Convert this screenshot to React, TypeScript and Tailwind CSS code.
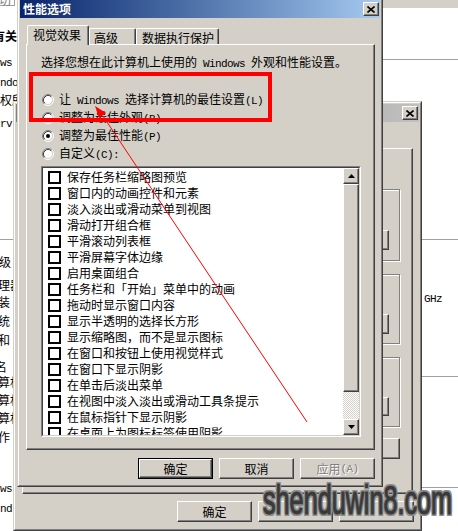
import React from 'react';

const raised =
  'bg-[#d4d0c8] border border-t-white border-l-white border-r-[#404040] border-b-[#404040] shadow-[inset_-1px_-1px_0_#808080]';

const Lat = ({ children }: { children: React.ReactNode }) => (
  <span className="[font-family:'Liberation_Mono',monospace] text-[11px] tracking-[-0.6px]">{children}</span>
);

const CloseBtn = () => (
  <div className={`w-[16px] h-[14px] flex items-center justify-center ${raised}`}>
    <svg width="8" height="7" viewBox="0 0 8 7">
      <path d="M0.5 0.5L7.5 6.5M7.5 0.5L0.5 6.5" stroke="#000" strokeWidth="1.6" />
    </svg>
  </div>
);

const Tri = ({ down }: { down?: boolean }) => (
  <svg width="7" height="4" viewBox="0 0 7 4">
    <path d={down ? 'M0 0H7L3.5 4Z' : 'M0 4H7L3.5 0Z'} fill="#000" />
  </svg>
);

const Radio = ({ checked }: { checked?: boolean }) => (
  <svg width="12" height="12" viewBox="0 0 12 12" className="shrink-0">
    <circle cx="6" cy="6" r="4.5" fill="#fff" />
    <path d="M2.11 9.89A5.5 5.5 0 0 1 9.89 2.11" fill="none" stroke="#808080" />
    <path d="M9.89 2.11A5.5 5.5 0 0 1 2.11 9.89" fill="none" stroke="#ffffff" />
    <path d="M2.82 9.18A4.5 4.5 0 0 1 9.18 2.82" fill="none" stroke="#404040" />
    <path d="M9.18 2.82A4.5 4.5 0 0 1 2.82 9.18" fill="none" stroke="#d4d0c8" />
    {checked && <circle cx="6" cy="6" r="2" fill="#000" />}
  </svg>
);

const Btn = ({ children, def, disabled }: { children?: React.ReactNode; def?: boolean; disabled?: boolean }) => (
  <div className={`w-[75px] h-[21px] shrink-0 ${def ? 'border border-black' : ''}`}>
    <div
      className={`h-full flex items-center justify-center leading-[14px] ${raised} ${
        disabled ? 'text-[#808080] [text-shadow:1px_1px_0_#fff]' : 'text-black'
      }`}
    >
      {children}
    </div>
  </div>
);

const items = [
  '保存任务栏缩略图预览',
  '窗口内的动画控件和元素',
  '淡入淡出或滑动菜单到视图',
  '滑动打开组合框',
  '平滑滚动列表框',
  '平滑屏幕字体边缘',
  '启用桌面组合',
  '任务栏和「开始」菜单中的动画',
  '拖动时显示窗口内容',
  '显示半透明的选择长方形',
  '显示缩略图，而不是显示图标',
  '在窗口和按钮上使用视觉样式',
  '在窗口下显示阴影',
  '在单击后淡出菜单',
  '在视图中淡入淡出或滑动工具条提示',
  '在鼠标指针下显示阴影',
  '在桌面上为图标标签使用阴影',
];

// window behind the dialog, only its right strip and bottom show
const BackWindow = () => (
  <div className="absolute left-[13px] top-[101px] w-[409px] h-[430px] border border-t-[#d4d0c8] border-l-[#d4d0c8] border-r-[#404040] border-b-[#404040]">
    <div className="h-full border border-t-white border-l-white border-r-[#808080] border-b-[#808080] bg-[#d4d0c8] p-px flex flex-col">
      <div className="h-[18px] shrink-0 flex items-center justify-end bg-linear-to-r from-[#808080] to-[#c0c0c0] pr-px">
        <CloseBtn />
      </div>
      <div className="mt-[26px] ml-[6px] w-[391px] h-[346px] shrink-0 border border-t-white border-l-white border-r-[#404040] border-b-[#404040] shadow-[inset_-1px_-1px_0_#808080] pt-[40px] pl-[7px] pr-[12px] flex flex-col">
        <div className="h-[72px] border border-[#808080] shadow-[inset_1px_1px_0_#fff,1px_1px_0_#fff] pt-[40px] pr-[10px] flex justify-end">
          <div className={`w-[75px] h-[20px] ${raised}`} />
        </div>
        <div className="mt-[13px] h-[70px] border border-[#808080] shadow-[inset_1px_1px_0_#fff,1px_1px_0_#fff] pt-[39px] pr-[10px] flex justify-end">
          <div className={`w-[75px] h-[20px] ${raised}`} />
        </div>
        <div className="mt-[13px] h-[70px] border border-[#808080] shadow-[inset_1px_1px_0_#fff,1px_1px_0_#fff] pt-[39px] pr-[10px] flex justify-end">
          <div className={`w-[75px] h-[19px] ${raised}`} />
        </div>
        <div className="mt-[11px] flex justify-end">
          <div className={`w-[75px] h-[21px] ${raised}`} />
        </div>
      </div>
      {/* the last two captions sit under the watermark */}
      <div className="mt-[7px] flex justify-end gap-[6px] pr-[5px]">
        <Btn>确定</Btn>
        <Btn />
        <Btn />
      </div>
    </div>
  </div>
);

const Dialog = () => (
  <div className="absolute left-[17px] top-[-3px] w-[366px] h-[490px] border border-t-[#d4d0c8] border-l-[#d4d0c8] border-r-[#404040] border-b-[#404040]">
    <div className="h-full border border-t-white border-l-white border-r-[#808080] border-b-[#808080] bg-[#d4d0c8] p-px flex flex-col">
      <div className="h-[18px] shrink-0 flex items-center justify-between bg-linear-to-r from-[#0a246a] to-[#a6caf0] pl-[3px] pr-px">
        <span className="text-white font-bold leading-[14px]">性能选项</span>
        <CloseBtn />
      </div>

      <div className="mt-[7px] h-[19px] shrink-0 flex items-end pl-[7px] leading-[14px]">
        <div className="relative z-10 w-[62px] h-[20px] mb-[-1px] bg-[#d4d0c8] border-t border-l border-r border-t-white border-l-white border-r-[#404040] shadow-[inset_-1px_0_0_#808080] rounded-t-[2px] pl-[5px] pt-[2px]">
          视觉效果
        </div>
        <div className="w-[47px] h-[16px] border-t border-l border-r border-t-white border-l-white border-r-[#404040] shadow-[inset_-1px_0_0_#808080] rounded-t-[2px] pl-[4px] pt-[2px]">
          高级
        </div>
        <div className="w-[83px] h-[16px] border-t border-l border-r border-t-white border-l-white border-r-[#404040] shadow-[inset_-1px_0_0_#808080] rounded-t-[2px] pl-[5px] pt-[2px]">
          数据执行保护
        </div>
      </div>

      <div className="ml-[6px] w-[349px] h-[406px] shrink-0 border border-t-white border-l-white border-r-[#404040] border-b-[#404040] shadow-[inset_-1px_-1px_0_#808080] pt-[10px] pl-[14px]">
        <div className="h-[14px] leading-[14px] whitespace-nowrap">
          选择您想在此计算机上使用的<Lat> Windows </Lat>外观和性能设置。
        </div>

        <div className="mt-[22px] flex flex-col leading-[14px] whitespace-nowrap">
          <div className="h-[18px] flex items-center gap-[5px] pl-px">
            <Radio />
            <span>
              让<Lat> Windows </Lat>选择计算机的最佳设置<Lat>(L)</Lat>
            </span>
          </div>
          <div className="h-[18px] flex items-center gap-[5px] pl-px">
            <Radio />
            <span>
              调整为最佳外观<Lat>(B)</Lat>
            </span>
          </div>
          <div className="h-[18px] flex items-center gap-[5px] pl-px">
            <Radio checked />
            <span>
              调整为最佳性能<Lat>(P)</Lat>
            </span>
          </div>
          <div className="h-[18px] flex items-center gap-[5px] pl-px">
            <Radio />
            <span>
              自定义<Lat>(C):</Lat>
            </span>
          </div>
        </div>

        <div className="mt-[3px] w-[320px] h-[271px] border border-t-[#808080] border-l-[#808080] border-r-white border-b-white">
          <div className="h-full border border-t-[#404040] border-l-[#404040] border-r-[#d4d0c8] border-b-[#d4d0c8] bg-white flex">
            <div className="flex-1 overflow-hidden pt-px pl-[5px] leading-[14px] whitespace-nowrap">
              {items.map((t) => (
                <div key={t} className="h-[16px] flex items-center gap-[6px]">
                  <span className="w-[13px] h-[13px] shrink-0 border-2 border-black bg-white" />
                  <span>{t}</span>
                </div>
              ))}
            </div>
            <div className="w-[16px] flex flex-col">
              <div className={`h-[16px] shrink-0 flex items-center justify-center ${raised}`}>
                <Tri />
              </div>
              <div className={`h-[208px] shrink-0 ${raised}`} />
              <div className="flex-1 bg-[repeating-conic-gradient(#d4d0c8_0%_25%,#ffffff_0%_50%)] [background-size:2px_2px]" />
              <div className={`h-[16px] shrink-0 flex items-center justify-center ${raised}`}>
                <Tri down />
              </div>
            </div>
          </div>
        </div>
      </div>

      <div className="mt-[8px] flex justify-end gap-[6px] pr-[5px]">
        <Btn def>确定</Btn>
        <Btn>取消</Btn>
        <Btn disabled>
          应用<Lat>(A)</Lat>
        </Btn>
      </div>
    </div>
  </div>
);

// fragments of the page behind, left of the windows
const leftBits: { cls: string; node: React.ReactNode }[] = [
  { cls: 'top-[29px] left-[-7px] font-bold', node: '有关' },
  { cls: 'top-[54px] left-0', node: <><Lat>ws </Lat>版</> },
  { cls: 'top-[74px] left-0', node: <Lat>ndows</Lat> },
  { cls: 'top-[93px] left-0', node: '权所有' },
  { cls: 'top-[115px] left-0', node: <Lat>rv:</Lat> },
  { cls: 'top-[255px] left-[-1px]', node: '级' },
  { cls: 'top-[278px] left-[-2px]', node: '理器' },
  { cls: 'top-[295px] left-[-2px]', node: '装' },
  { cls: 'top-[314px] left-[-2px]', node: '统' },
  { cls: 'top-[333px] left-[-2px]', node: '和' },
  { cls: 'top-[360px] left-[-5px]', node: '名' },
  { cls: 'top-[375px] left-[-2px]', node: '算机' },
  { cls: 'top-[393px] left-[-2px]', node: '算机' },
  { cls: 'top-[411px] left-[-2px]', node: '算机' },
  { cls: 'top-[430px] left-[-2px]', node: '作' },
  { cls: 'top-[480px] left-0', node: <Lat>ws</Lat> },
  { cls: 'top-[500px] left-0', node: <Lat>nd</Lat> },
];

export default function App() {
  return (
    <div className="relative w-[458px] h-[531px] overflow-hidden bg-white text-[12px] text-black [font-family:'Noto_Sans_CJK_SC',sans-serif]">
      {/* background page */}
      <div className="absolute left-0 top-0 w-[17px] h-[531px] overflow-hidden leading-[14px] whitespace-nowrap">
        <div className="absolute left-[-3px] top-[-8px] w-[18px] h-[14px] border border-[#a0a0a0] text-[#808080] pl-px">切</div>
        {leftBits.map((b, i) => (
          <div key={i} className={`absolute ${b.cls}`}>
            {b.node}
          </div>
        ))}
      </div>
      <div className="absolute left-0 top-[239px] w-[458px] h-px bg-[#a0a0a0]" />
      <div className="absolute left-[383px] top-0 w-[75px] h-[8px] bg-[#d4d0c8]" />
      <div className="absolute left-[383px] top-[59px] w-[75px] h-px bg-[#a0a0a0]" />
      <div className="absolute left-[422px] top-[376px] w-[36px] h-px bg-[#a0a0a0]" />
      <div className="absolute left-[422px] top-[487px] w-[36px] h-px bg-[#a0a0a0]" />
      <div className="absolute left-[424px] top-[290px] leading-[14px]">
        <Lat>GHz</Lat>
      </div>

      <BackWindow />
      <Dialog />

      {/* red annotation */}
      <div className="absolute left-[29px] top-[72px] w-[243px] h-[50px] border-4 border-[#ff0000]" />
      <svg className="absolute left-0 top-0 pointer-events-none" width="458" height="531" viewBox="0 0 458 531">
        <path d="M103 116L307 422" stroke="#ff0000" strokeWidth="1" fill="none" />
        <path d="M95 106L99 118L106 113Z" fill="#ff0000" />
      </svg>

      {/* watermark */}
      <div className="absolute left-[263px] top-[480px] origin-left scale-x-[0.63] whitespace-nowrap text-[40px] leading-[40px] text-[#3a3a3a] [-webkit-text-stroke:1.2px_#3a3a3a] [font-family:'Liberation_Sans',sans-serif] [text-shadow:2px_2px_0_#8e8e8e,-2px_-2px_0_#8e8e8e,2px_-2px_0_#8e8e8e,-2px_2px_0_#8e8e8e,2px_0_0_#8e8e8e,-2px_0_0_#8e8e8e,0_2px_0_#8e8e8e,0_-2px_0_#8e8e8e] pointer-events-none">
        shenduwin8.com
      </div>
    </div>
  );
}
